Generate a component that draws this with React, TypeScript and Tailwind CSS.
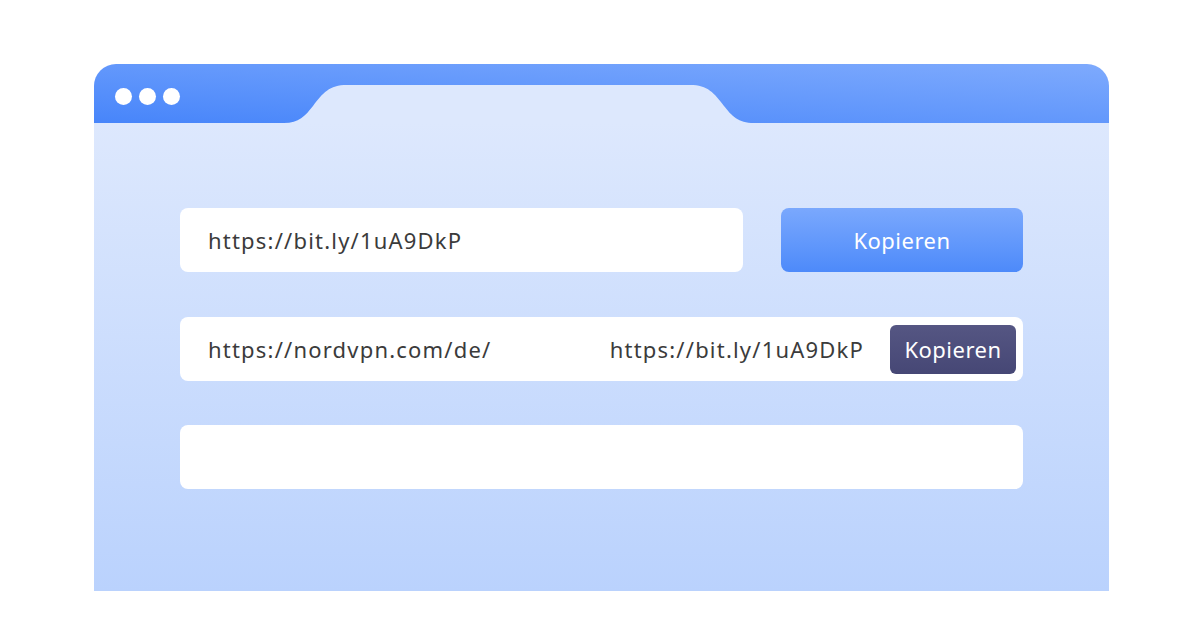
import React from 'react';

const font = { fontFamily: '"Noto Sans", Inter, sans-serif' };

const UrlBox: React.FC<{ children?: React.ReactNode; className?: string }> = ({ children, className }) => (
  <div className={`h-16 bg-white rounded-lg flex items-center ${className ?? ''}`}>{children}</div>
);

export default function App() {
  return (
    <div className="w-[1200px] h-[642px] bg-white pt-16 pl-[94px]" style={font}>
      <div className="w-[1015px] h-[527px] flex flex-col rounded-t-[22px] overflow-hidden">
        {/* Header with tab */}
        <div className="relative h-[59px] shrink-0 bg-linear-to-tr from-[#4785fa] to-[#7eaafd]">
          <div className="flex items-center gap-[7px] pl-[21px] pt-[24px]">
            <span className="w-[17px] h-[17px] rounded-full bg-white" />
            <span className="w-[17px] h-[17px] rounded-full bg-white" />
            <span className="w-[17px] h-[17px] rounded-full bg-white" />
          </div>
          <svg className="absolute left-0 bottom-0" width="1015" height="59" viewBox="0 0 1015 59">
            <path
              d="M170 59 L190 59 C205 59 211 52 219 42 C229 29 235 21 253 21 L596 21 C614 21 620 29 630 42 C638 52 644 59 660 59 L680 59 Z"
              fill="#dde8fd"
            />
          </svg>
        </div>

        {/* Body */}
        <div className="flex-1 bg-linear-to-b from-[#dde8fd] to-[#bad2fd] px-[86px] pt-[85px] flex flex-col gap-[44px]">
          <div className="flex gap-[38px]">
            <UrlBox className="w-[563px] pl-7">
              <span className="text-[22px] tracking-[1.2px] text-[#3b3b3b]">https://bit.ly/1uA9DkP</span>
            </UrlBox>
            <button className="flex-1 h-16 rounded-lg bg-linear-to-b from-[#7aa8fd] to-[#4d8afa] text-white text-[22px] tracking-[0.5px]">
              Kopieren
            </button>
          </div>

          <UrlBox className="mt-px pl-7 pr-[7px]">
            <span className="text-[22px] tracking-[1.2px] text-[#3b3b3b]">https://nordvpn.com/de/</span>
            <span className="text-[22px] tracking-[1.2px] text-[#3b3b3b] ml-auto">https://bit.ly/1uA9DkP</span>
            <button className="ml-[26px] w-[126px] h-[49px] rounded-md bg-linear-to-b from-[#555683] to-[#464775] text-white text-[22px] tracking-[0.5px]">
              Kopieren
            </button>
          </UrlBox>

          <UrlBox />
        </div>
      </div>
    </div>
  );
}
